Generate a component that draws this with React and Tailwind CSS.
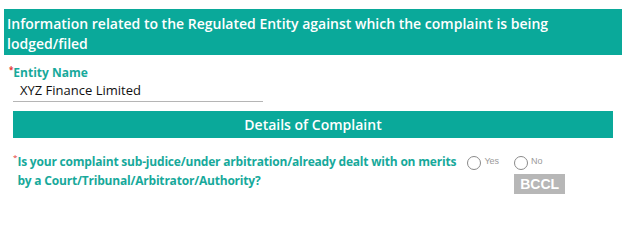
export default function App() {
  return (
    <div className="w-[630px] h-[216px] bg-white font-['Open_Sans',sans-serif] pt-[9px]">
      <div className="ml-[4px] w-[618px] h-[46px] bg-[#0aa99a] px-[3px] pt-[5px] text-white text-[14px] leading-[20px] font-semibold">
        Information related to the Regulated Entity against which the complaint is being lodged/filed
      </div>

      <div className="ml-[13px] mt-[10px]">
        <div className="flex items-start text-[12px] leading-[16px] font-bold text-[#17a99b]">
          <span className="text-[#e53935] text-[8px] leading-[10px] -ml-[4px]">*</span>
          Entity Name
        </div>
        <div className="w-[250px] border-b border-[#b5b5b5] pl-[7px] pb-[2px] text-[13px] leading-[18px] text-[#111]">
          XYZ Finance Limited
        </div>
      </div>

      <div className="ml-[13px] mt-[9px] w-[600px] h-[27px] bg-[#0aa99a] flex items-center justify-center text-white text-[14px] font-semibold">
        Details of Complaint
      </div>

      <div className="ml-[13px] mt-[14px] flex items-start">
        <span className="text-[#e53935] text-[8px] leading-[10px]">*</span>
        <div className="w-[450px] text-[12px] leading-[19px] font-bold tracking-[-0.2px] text-[#17a99b] whitespace-nowrap">
          Is your complaint sub-judice/under arbitration/already dealt with on merits
          <br />
          by a Court/Tribunal/Arbitrator/Authority?
        </div>
        <div className="mt-[4px] flex items-start gap-[15px]">
          <label className="flex items-center gap-[3px]">
            <span className="w-[14px] h-[14px] rounded-full border border-[#8a8a8a]"></span>
            <span className="text-[9px] text-[#9a9a9a] font-['Liberation_Sans',sans-serif] -mt-[3px]">Yes</span>
          </label>
          <div className="flex flex-col">
            <label className="flex items-center gap-[3px]">
              <span className="w-[14px] h-[14px] rounded-full border border-[#8a8a8a]"></span>
              <span className="text-[9px] text-[#9a9a9a] font-['Liberation_Sans',sans-serif] -mt-[3px]">No</span>
            </label>
            <div className="mt-[4px] w-[51px] h-[20px] bg-[#b7b7b7] flex items-center justify-end pr-[6px] text-white text-[14px] font-bold font-['Liberation_Sans',sans-serif]">
              BCCL
            </div>
          </div>
        </div>
      </div>
    </div>
  );
}
